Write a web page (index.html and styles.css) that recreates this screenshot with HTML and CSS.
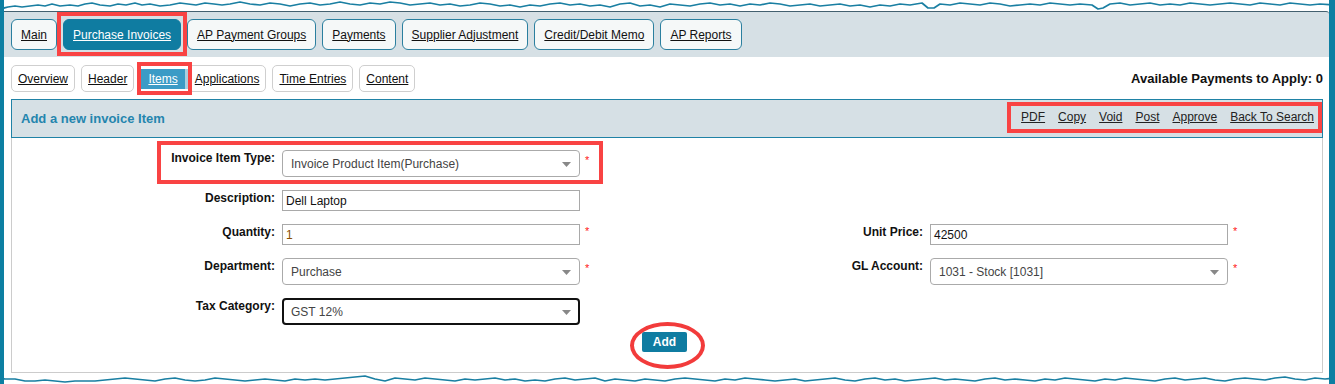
FILE: index.html
```html
<!DOCTYPE html>
<html lang="en">
<head>
<meta charset="utf-8">
<title>Purchase Invoices - Items</title>
<link rel="stylesheet" href="styles.css">
</head>
<body>
<div class="frame">
  <svg class="torn torn-top" width="1335" height="14" viewBox="0 0 1335 14">
    <polygon class="torn-fill" points="0,0 1335,0 1335,5 1320,4 1310,5 1300,4 1290,3 1280,5 1270,4 1260,3 1250,5 1240,4 1230,3 1220,4 1210,5 1200,4 1190,3 1180,5 1170,4 1160,5 1150,3 1140,4 1130,5 1120,3 1110,4 1103,8 1098,9 1092,5 1080,4 1070,5 1060,4 1050,3 1040,5 1030,4 1020,5 1010,6 1000,4 990,3 980,5 970,4 960,3 950,5 940,4 934,8 928,8 922,3 910,5 900,4 890,6 880,5 870,7 860,5 850,6 840,4 830,5 820,6 810,4 800,5 790,6 780,4 770,3 760,5 750,4 740,6 730,4 720,5 710,3 700,4 690,6 680,5 670,4 660,7 650,5 640,6 630,3 620,4 610,7 600,5 590,6 580,4 570,5 560,3 550,4 540,6 530,5 520,7 510,5 500,6 490,4 480,3 470,5 460,6 450,4 440,5 430,3 420,4 410,5 400,3 390,2 380,4 370,3 360,5 350,4 340,2 330,4 320,5 310,3 300,4 290,6 280,4 270,3 260,5 250,4 240,2 230,4 222,5 214,4 205,3 196,5 188,4 180,3 170,5 160,6 150,4 142,5 135,3 126,5 118,4 110,6 100,5 92,3 85,4 78,6 70,5 60,6 52,4 45,6 38,5 30,6 22,7 15,6 8,7 0,9"/>
    <polyline class="torn-line" points="0,9 8,7 15,6 22,7 30,6 38,5 45,6 52,4 60,6 70,5 78,6 85,4 92,3 100,5 110,6 118,4 126,5 135,3 142,5 150,4 160,6 170,5 180,3 188,4 196,5 205,3 214,4 222,5 230,4 240,2 250,4 260,5 270,3 280,4 290,6 300,4 310,3 320,5 330,4 340,2 350,4 360,5 370,3 380,4 390,2 400,3 410,5 420,4 430,3 440,5 450,4 460,6 470,5 480,3 490,4 500,6 510,5 520,7 530,5 540,6 550,4 560,3 570,5 580,4 590,6 600,5 610,7 620,4 630,3 640,6 650,5 660,7 670,4 680,5 690,6 700,4 710,3 720,5 730,4 740,6 750,4 760,5 770,3 780,4 790,6 800,5 810,4 820,6 830,5 840,4 850,6 860,5 870,7 880,5 890,6 900,4 910,5 922,3 928,8 934,8 940,4 950,5 960,3 970,4 980,5 990,3 1000,4 1010,6 1020,5 1030,4 1040,5 1050,3 1060,4 1070,5 1080,4 1092,5 1098,9 1103,8 1110,4 1120,3 1130,5 1140,4 1150,3 1160,5 1170,4 1180,5 1190,3 1200,4 1210,5 1220,4 1230,3 1240,4 1250,5 1260,3 1270,4 1280,5 1290,3 1300,4 1310,5 1320,4 1335,5"/>
  </svg>

  <nav class="topbar">
    <a class="tab" href="#">Main</a>
    <a class="tab tab-active annotated" href="#">Purchase Invoices</a>
    <a class="tab" href="#">AP Payment Groups</a>
    <a class="tab" href="#">Payments</a>
    <a class="tab" href="#">Supplier Adjustment</a>
    <a class="tab" href="#">Credit/Debit Memo</a>
    <a class="tab" href="#">AP Reports</a>
  </nav>

  <div class="subrow">
    <div class="subtabs">
      <a class="subtab" href="#">Overview</a>
      <a class="subtab" href="#">Header</a>
      <a class="subtab subtab-active" href="#">Items</a>
      <a class="subtab" href="#">Applications</a>
      <a class="subtab" href="#">Time Entries</a>
      <a class="subtab" href="#">Content</a>
    </div>
    <div class="avail">Available Payments to Apply: 0</div>
  </div>

  <section class="panel">
    <header class="panel-head">
      <h2 class="panel-title">Add a new invoice Item</h2>
      <div class="actions">
        <a href="#">PDF</a>
        <a href="#">Copy</a>
        <a href="#">Void</a>
        <a href="#">Post</a>
        <a href="#">Approve</a>
        <a href="#">Back To Search</a>
      </div>
    </header>
    <div class="panel-body">
      <div class="annot-row"></div>
      <div class="form-grid">
        <label class="lbl">Invoice Item Type:</label>
        <div class="field">
          <div class="select"><span>Invoice Product Item(Purchase)</span><svg class="caret" width="9" height="5" viewBox="0 0 9 5"><polygon points="0,0 9,0 4.5,5"/></svg></div>
          <span class="req">*</span>
        </div>
        <div></div><div></div>

        <label class="lbl">Description:</label>
        <div class="field"><div class="input">Dell Laptop</div></div>
        <div></div><div></div>

        <label class="lbl">Quantity:</label>
        <div class="field"><div class="input input-qty">1</div><span class="req">*</span></div>
        <label class="lbl">Unit Price:</label>
        <div class="field"><div class="input">42500</div><span class="req">*</span></div>

        <label class="lbl">Department:</label>
        <div class="field">
          <div class="select"><span>Purchase</span><svg class="caret" width="9" height="5" viewBox="0 0 9 5"><polygon points="0,0 9,0 4.5,5"/></svg></div>
          <span class="req">*</span>
        </div>
        <label class="lbl">GL Account:</label>
        <div class="field">
          <div class="select"><span>1031 - Stock [1031]</span><svg class="caret" width="9" height="5" viewBox="0 0 9 5"><polygon points="0,0 9,0 4.5,5"/></svg></div>
          <span class="req">*</span>
        </div>

        <label class="lbl">Tax Category:</label>
        <div class="field">
          <div class="select select-focus"><span>GST 12%</span><svg class="caret" width="9" height="5" viewBox="0 0 9 5"><polygon points="0,0 9,0 4.5,5"/></svg></div>
        </div>
        <div></div><div></div>
      </div>
      <div class="btn-row">
        <span class="btn-wrap"><button class="add-btn" type="button">Add</button></span>
      </div>
    </div>
  </section>

  <svg class="torn torn-bottom" width="1335" height="12" viewBox="0 372 1335 12">
    <polygon class="torn-fill" points="0,384 1335,384 1335,378 1325,379 1315,378 1305,380 1295,379 1285,377 1275,378 1265,380 1255,379 1245,378 1235,379 1225,381 1215,380 1205,378 1195,379 1185,380 1175,378 1165,379 1155,381 1145,380 1135,379 1125,378 1115,380 1105,379 1095,381 1085,380 1075,379 1065,378 1055,380 1045,379 1035,381 1025,380 1015,379 1005,380 995,378 985,379 975,381 965,380 955,379 945,380 935,378 925,379 915,380 905,381 895,379 885,380 875,378 865,379 855,381 845,380 835,378 825,379 815,380 805,381 795,379 785,380 775,381 765,380 755,379 745,378 735,380 725,379 715,381 705,380 695,379 685,378 675,379 665,381 655,380 645,379 635,381 625,380 615,379 605,381 595,378 585,379 575,380 565,378 555,379 545,381 535,380 525,381 515,379 505,380 495,378 485,379 475,380 465,379 455,381 445,380 435,379 425,378 415,380 405,379 395,378 385,381 375,379 365,376 355,377 345,378 335,379 325,380 315,379 305,380 295,379 285,381 275,380 265,379 255,380 245,381 235,380 225,379 215,378 205,380 195,381 185,380 175,378 165,379 155,381 145,380 135,379 125,378 115,379 105,380 95,381 85,381 75,381 65,382 55,381 45,380 35,381 25,381 15,379 5,379 0,378"/>
    <polyline class="torn-line" points="0,378 5,379 15,379 25,381 35,381 45,380 55,381 65,382 75,381 85,381 95,381 105,380 115,379 125,378 135,379 145,380 155,381 165,379 175,378 185,380 195,381 205,380 215,378 225,379 235,380 245,381 255,380 265,379 275,380 285,381 295,379 305,380 315,379 325,380 335,379 345,378 355,377 365,376 375,379 385,381 395,378 405,379 415,380 425,378 435,379 445,380 455,381 465,379 475,380 485,379 495,378 505,380 515,379 525,381 535,380 545,381 555,379 565,378 575,380 585,379 595,378 605,381 615,379 625,380 635,381 645,379 655,380 665,381 675,379 685,378 695,379 705,380 715,381 725,379 735,380 745,378 755,379 765,380 775,381 785,380 795,379 805,381 815,380 825,379 835,378 845,380 855,381 865,379 875,378 885,380 895,379 905,381 915,380 925,379 935,378 945,380 955,379 965,380 975,381 985,379 995,378 1005,380 1015,379 1025,380 1035,381 1045,379 1055,380 1065,378 1075,379 1085,380 1095,381 1105,379 1115,380 1125,378 1135,379 1145,380 1155,381 1165,379 1175,378 1185,380 1195,379 1205,378 1215,380 1225,381 1235,379 1245,378 1255,379 1265,380 1275,378 1285,377 1295,379 1305,380 1315,378 1325,379 1335,378"/>
  </svg>
</div>
</body>
</html>
```

FILE: styles.css
```css
* {
  box-sizing: border-box;
}

html, body {
  margin: 0;
  padding: 0;
  background: #ffffff;
}

body {
  font-family: "Liberation Sans", Arial, sans-serif;
  font-size: 12px;
  color: #111;
}

a {
  color: #111;
}

.frame {
  position: relative;
  width: 1335px;
  height: 384px;
  overflow: hidden;
  padding-top: 11px;
  border-left: 4px solid #0d7fa2;
  border-right: 6px solid #0d7fa2;
  background: #fff;
}

/* torn paper edges (decorative overlays) */
.torn {
  position: absolute;
  left: -4px;
  z-index: 5;
}
.torn-top { top: 0; }
.torn-bottom { top: 372px; }
.torn-fill { fill: #ffffff; }
.torn-line {
  fill: none;
  stroke: #1a7fa2;
  stroke-width: 1.7;
  stroke-linejoin: round;
}

/* top tabs */
.topbar {
  display: flex;
  align-items: center;
  gap: 6px;
  height: 46px;
  padding: 0 7px;
  background: #d6e0e5;
  border-top: 1px solid #43606f;
  border-top-right-radius: 3px;
}

.tab {
  display: flex;
  align-items: center;
  height: 31px;
  padding: 0 9px;
  border: 1px solid #2a7f9f;
  border-radius: 6px;
  background: #f5f8f8;
  color: #111;
  text-decoration: underline;
  white-space: nowrap;
}

.tab-active {
  background: #0f7ca1;
  border-color: #0f7ca1;
  color: #fff;
}

.annotated {
  position: relative;
}

.annotated::after {
  content: "";
  position: absolute;
  left: -7px;
  right: -7px;
  top: -8px;
  bottom: -7px;
  border: 4px solid #f94343;
  pointer-events: none;
}

/* sub tabs row */
.subrow {
  display: flex;
  align-items: center;
  justify-content: space-between;
  height: 42px;
  padding: 1px 6px 0 7px;
}

.subtabs {
  display: flex;
  align-items: center;
  gap: 6px;
}

.subtab {
  display: flex;
  align-items: center;
  height: 27px;
  padding: 0 6px;
  border: 1px solid #cfcfcf;
  border-radius: 5px;
  background: #fff;
  color: #111;
  text-decoration: underline;
  white-space: nowrap;
}

.subtab-active {
  position: relative;
  height: 20px;
  padding: 0 7px;
  border: none;
  border-radius: 0;
  background: #3b9bc6;
  color: #fff;
  box-shadow: 3px 0 0 #a9cfe0;
  margin-left: 1px;
  margin-right: -3px;
  z-index: 1;
}

.subtab-active::after {
  content: "";
  position: absolute;
  left: -4px;
  right: -7px;
  top: -7px;
  bottom: -6px;
  border: 4px solid #f94343;
  pointer-events: none;
}

.avail {
  font-weight: bold;
  font-size: 13px;
  color: #111;
  white-space: nowrap;
}

/* panel */
.panel {
  margin: 0 6px 0 7px;
}

.panel-head {
  display: flex;
  align-items: center;
  justify-content: space-between;
  height: 39px;
  padding: 0 0 0 9px;
  background: #d6e0e5;
  border: 1px solid #1f82a6;
}

.panel-title {
  margin: 0;
  font-size: 13px;
  font-weight: bold;
  color: #2485ae;
}

.actions {
  display: flex;
  align-items: center;
  gap: 13px;
  height: 31px;
  padding: 0 4px 0 10px;
  border: 4px solid #f94343;
  margin-top: -3px;
}

.actions a {
  color: #222;
  text-decoration: underline;
}

.panel-body {
  position: relative;
  height: 235px;
  padding-top: 12px;
  border: 1px solid #cccccc;
  border-top: none;
}

.annot-row {
  position: absolute;
  left: 145px;
  top: 3px;
  width: 446px;
  height: 43px;
  border: 4px solid #f94343;
  pointer-events: none;
}

.form-grid {
  display: grid;
  grid-template-columns: 270px 318px 330px 1fr;
  row-gap: 13px;
  align-items: start;
}

.lbl {
  display: block;
  padding: 1px 7px 0 0;
  line-height: 14px;
  text-align: right;
  font-weight: bold;
  color: #111;
  white-space: nowrap;
  position: relative;
  z-index: 1;
}

.field {
  display: flex;
  align-items: center;
  position: relative;
  z-index: 1;
}

.input {
  width: 298px;
  height: 21px;
  padding: 0 3px;
  display: flex;
  align-items: center;
  border: 1px solid #a9a9a9;
  background: #fff;
  color: #111;
  font-size: 12px;
}

.input-qty {
  color: #8a4f00;
}

.field .input + .req,
.field .select + .req {
  margin-left: 5px;
}

.select {
  width: 298px;
  height: 27px;
  display: flex;
  align-items: center;
  justify-content: space-between;
  padding: 0 8px 0 8px;
  border: 1px solid #aaaaaa;
  border-radius: 4px;
  background: #fff;
  color: #444;
}

.select-focus {
  border: 2px solid #111;
  padding-left: 7px;
  padding-right: 7px;
}

.caret {
  fill: #888;
  margin-top: 1px;
}

.req {
  color: #ff2020;
  font-size: 11px;
  line-height: 11px;
  margin-top: -6px;
}

.btn-row {
  display: flex;
  justify-content: center;
  margin-top: 7px;
  padding-right: 5px;
}

.btn-wrap {
  position: relative;
  display: inline-block;
}

.btn-wrap::after {
  content: "";
  position: absolute;
  left: -12px;
  top: -10px;
  width: 67px;
  height: 39px;
  border: 4px solid #f23b3b;
  border-radius: 50%;
  pointer-events: none;
}

.add-btn {
  display: block;
  width: 45px;
  height: 20px;
  padding: 0;
  border: none;
  border-radius: 2px;
  background: #0f7ca1;
  color: #fff;
  font-family: "Liberation Sans", Arial, sans-serif;
  font-size: 12px;
  font-weight: bold;
}
```
